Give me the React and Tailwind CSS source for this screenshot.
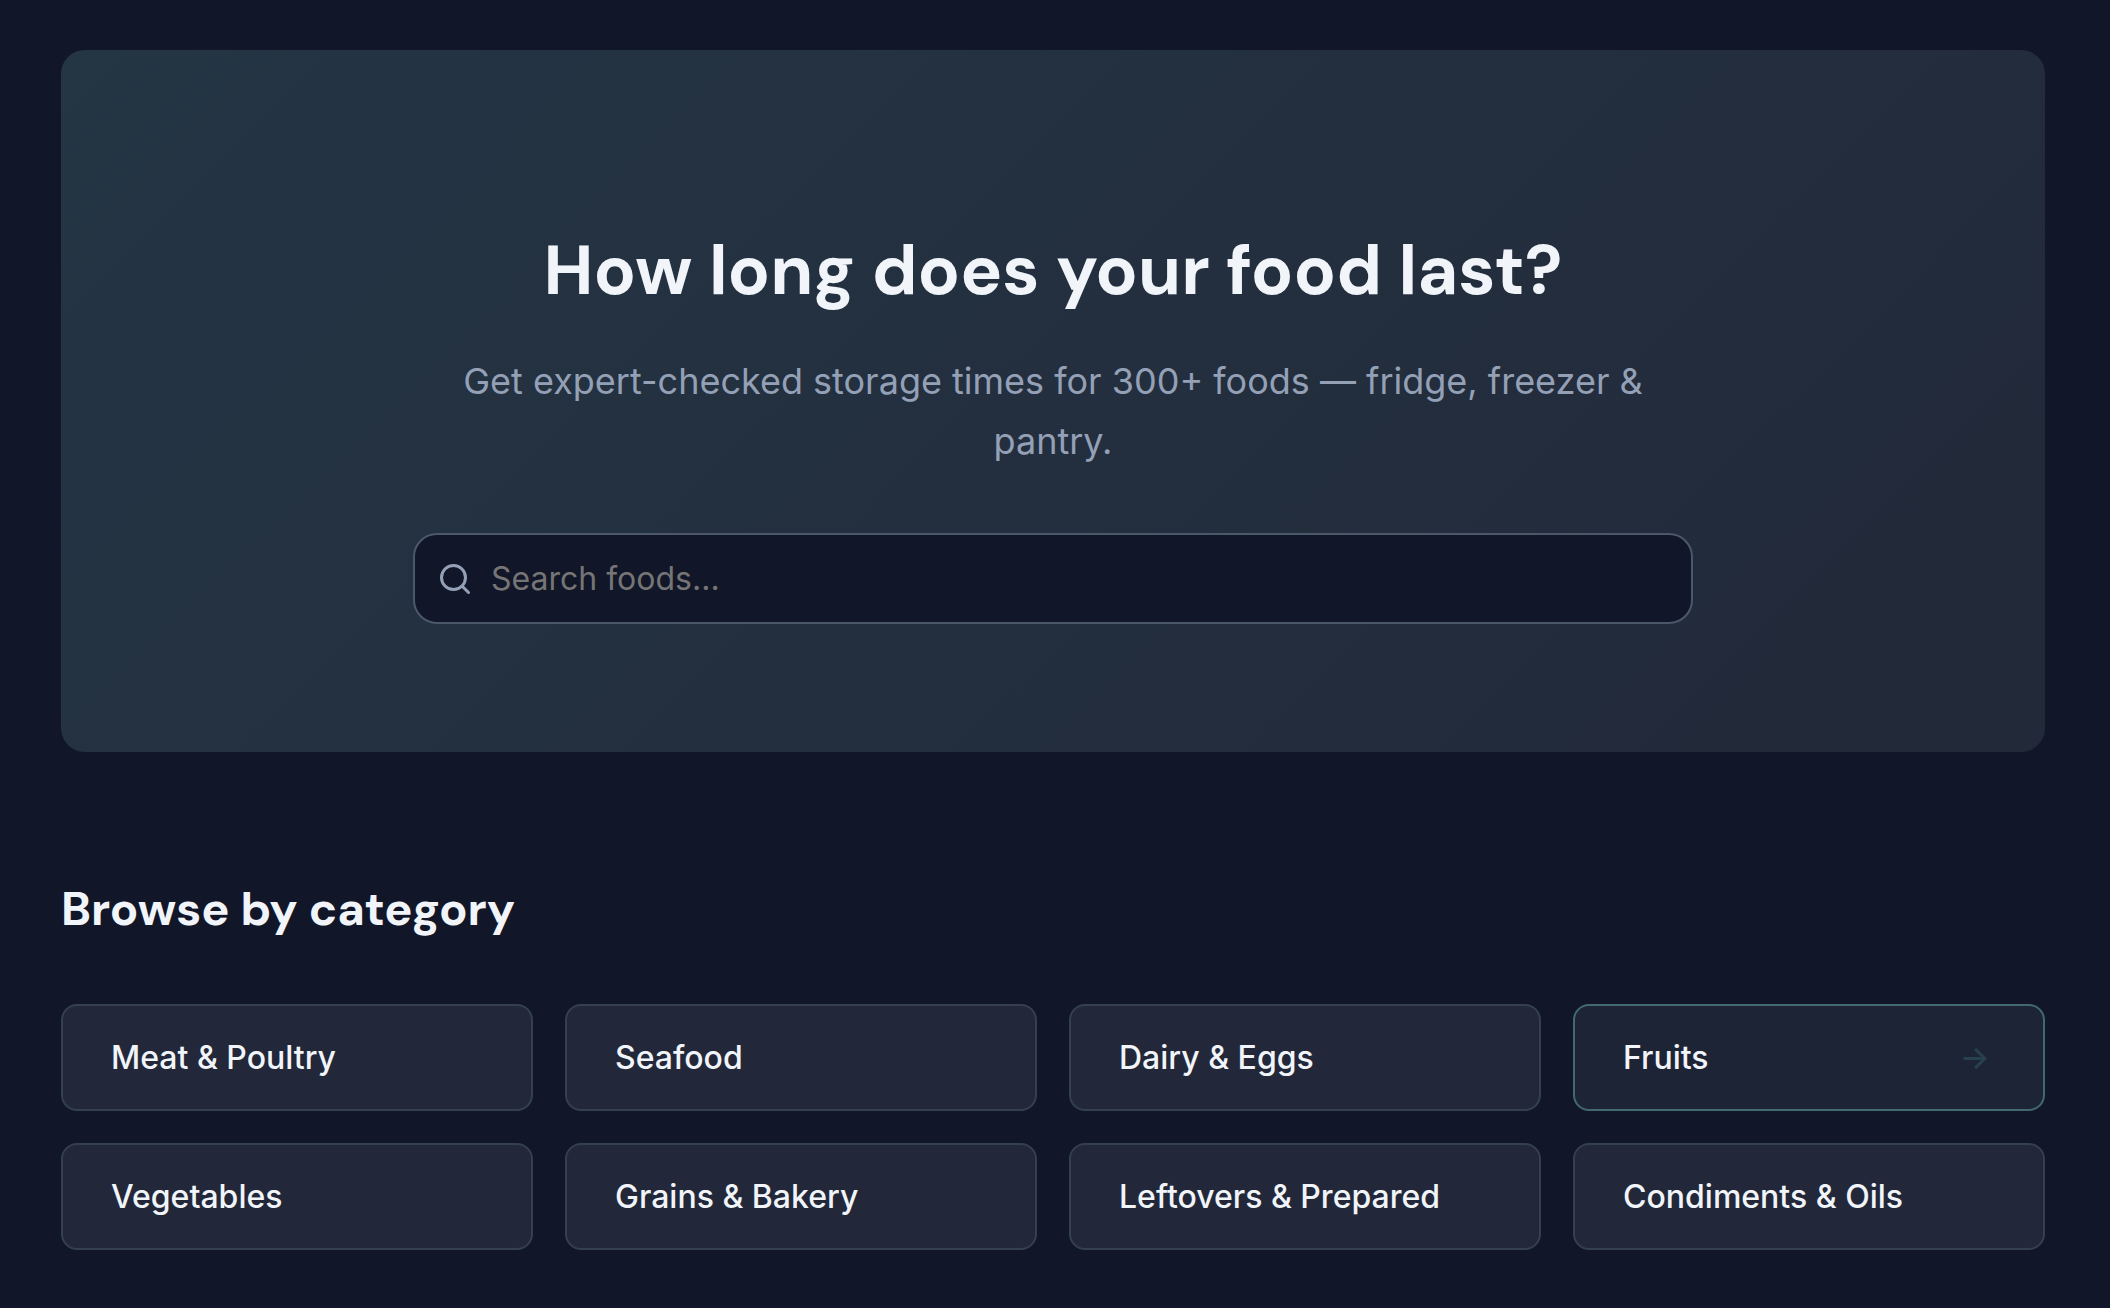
import React from "react";

const categories = [
  { name: "Meat & Poultry" },
  { name: "Seafood" },
  { name: "Dairy & Eggs" },
  { name: "Fruits", active: true },
  { name: "Vegetables" },
  { name: "Grains & Bakery" },
  { name: "Leftovers & Prepared" },
  { name: "Condiments & Oils" },
];

function SearchIcon() {
  return (
    <svg
      className="size-9 shrink-0 text-[#94a0b6]"
      viewBox="0 0 24 24"
      fill="none"
      stroke="currentColor"
      strokeWidth="2"
      strokeLinecap="round"
      strokeLinejoin="round"
      aria-hidden="true"
    >
      <circle cx="11" cy="11" r="8" />
      <path d="m21 21-4.35-4.35" />
    </svg>
  );
}

function Hero() {
  return (
    <section className="rounded-3xl bg-linear-135 from-[#243544] to-[#222939] px-8 pt-[181px] pb-32 text-center">
      <div className="mx-auto max-w-[1280px]">
        <h1 className="font-['DM_Sans',sans-serif] text-[70px] leading-[80px] font-bold">
          How long does your food last?
        </h1>
        <p className="mt-10 text-[36px] leading-[60px] text-[#94a0b6]">
          Get expert-checked storage times for 300+ foods — fridge, freezer &amp; pantry.
        </p>
        <form role="search" className="mt-[62px]" onSubmit={(e) => e.preventDefault()}>
          <label className="flex items-center gap-[18px] rounded-3xl border-2 border-[#4b5869] bg-[#111628] px-[22px]">
            <SearchIcon />
            <input
              type="text"
              aria-label="Search foods"
              placeholder="Search foods..."
              className="h-[87px] min-w-0 flex-1 bg-transparent text-[32px] outline-none placeholder:text-[#757575]"
            />
          </label>
        </form>
      </div>
    </section>
  );
}

function CategoryCard({ name, active }) {
  return (
    <a
      href="#"
      className={
        active
          ? "flex items-center justify-between rounded-2xl border-2 border-[#41696e] bg-[#1d2435] px-12 py-6"
          : "flex items-center justify-between rounded-2xl border-2 border-[#34404f] bg-[#222839] px-12 py-6"
      }
    >
      <span className="text-[32px] leading-[55px] font-medium">{name}</span>
      {active && (
        <span aria-hidden="true" className="pr-[5px] text-[32px] leading-[55px] font-medium text-[#27424d]">
          →
        </span>
      )}
    </a>
  );
}

export default function App() {
  return (
    <main className="min-h-screen bg-[#111628] pt-[50px] pr-[65px] pb-14 pl-[61px] font-['Inter',sans-serif] text-slate-100">
      <Hero />
      <section className="mt-32">
        <h2 className="font-['DM_Sans',sans-serif] text-[47px] leading-[58px] font-bold">
          Browse by category
        </h2>
        <nav aria-label="Food categories" className="mt-[66px] grid grid-cols-4 gap-8">
          {categories.map((category) => (
            <CategoryCard key={category.name} {...category} />
          ))}
        </nav>
      </section>
    </main>
  );
}
